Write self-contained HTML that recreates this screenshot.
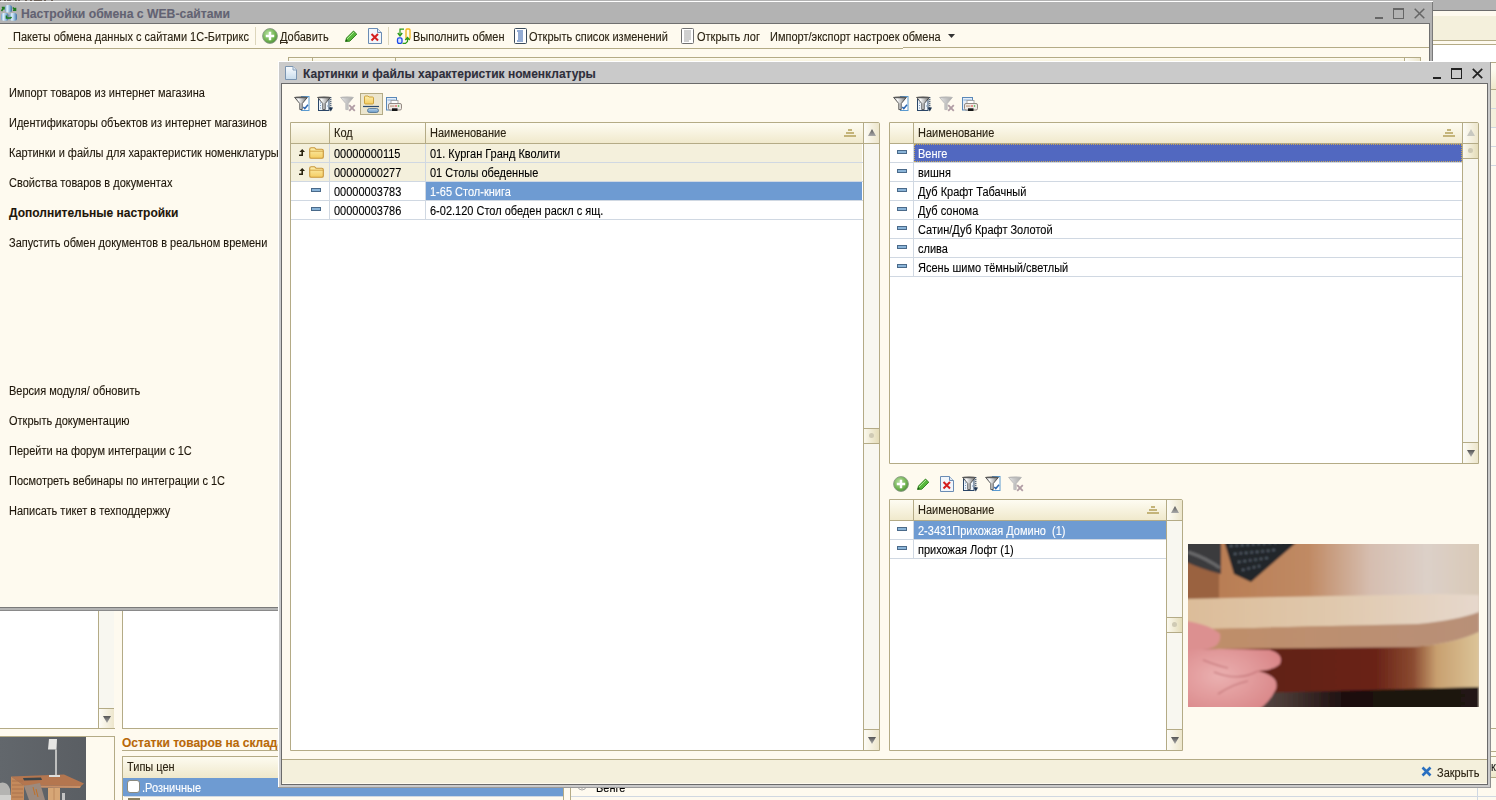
<!DOCTYPE html>
<html><head><meta charset="utf-8">
<style>
*{margin:0;padding:0;box-sizing:border-box}
html,body{width:1496px;height:800px;overflow:hidden}
body{position:relative;background:#fefaef;font-family:"Liberation Sans",sans-serif;font-size:11px;color:#2a2212}
.a{position:absolute}
.t{position:absolute;white-space:nowrap;line-height:13px;transform:scaleY(1.11);transform-origin:0 10.3px;-webkit-text-stroke:0.1px currentColor}
.min{position:absolute;height:3px;background:#222}
.max{position:absolute;border:1px solid #222;border-top-width:2px}
</style></head><body>
<svg width="0" height="0" style="position:absolute">
 <defs>
  <linearGradient id="gFun" x1="0" x2="1" y1="0" y2="0"><stop offset="0" stop-color="#9a9a9a"/><stop offset="0.3" stop-color="#fafafa"/><stop offset="0.65" stop-color="#b8b8b8"/><stop offset="1" stop-color="#5a5a5a"/></linearGradient>
  <linearGradient id="gFunL" x1="0" x2="1"><stop offset="0" stop-color="#e4e4e4"/><stop offset="1" stop-color="#a8a8a8"/></linearGradient>
  <linearGradient id="gThumb" x1="0" x2="1"><stop offset="0" stop-color="#fbf9ee"/><stop offset="1" stop-color="#e4dcb8"/></linearGradient>
  <radialGradient id="gAdd" cx="0.4" cy="0.35" r="0.7"><stop offset="0" stop-color="#b8e0a0"/><stop offset="0.7" stop-color="#6cb04c"/><stop offset="1" stop-color="#4a8a3a"/></radialGradient>
  <linearGradient id="gFold" x1="0" x2="0" y1="0" y2="1"><stop offset="0" stop-color="#fdf0b0"/><stop offset="1" stop-color="#f4cc60"/></linearGradient>
  <linearGradient id="gPill" x1="0" x2="0" y1="0" y2="1"><stop offset="0" stop-color="#b8d4ec"/><stop offset="1" stop-color="#6a98c4"/></linearGradient>
  <symbol id="funnel" viewBox="0 0 16 16"><path d="M0.6 1.4 L5.8 7.6 V13.6 H8.2 V7.6 L13.4 1.4 Z" fill="url(#gFun)" stroke="#484848" stroke-width="0.9" stroke-linejoin="round"/><ellipse cx="7" cy="1.4" rx="6.4" ry="0.9" fill="#5a5a5a"/></symbol>
  <symbol id="icChk" viewBox="0 0 16 16"><rect x="7.5" y="0.5" width="7.5" height="14" fill="#fff" stroke="#5a9ad0" stroke-width="1"/><use href="#funnel" x="0" y="0" width="16" height="16"/><path d="M9.3 11 L10.8 12.6 L14 8.8" fill="none" stroke="#2a66b0" stroke-width="1.5"/></symbol>
  <symbol id="icSort" viewBox="0 0 16 16"><rect x="1.5" y="3.5" width="10.5" height="11" fill="#eef4fa" stroke="#2a4668" stroke-width="1"/><path d="M3 7h1M3 9.5h1M3 12h1M10 10h1" stroke="#7a9ac0"/><use href="#funnel" x="0" y="0" width="16" height="16"/><path d="M13.8 1 V12" stroke="#2a4060" stroke-width="1.1" stroke-dasharray="1.2 0.8"/><path d="M11.6 11.5 H16 L13.8 15.5Z" fill="#1e3450"/></symbol>
  <symbol id="icX" viewBox="0 0 16 16"><path d="M0.6 1.4 L5.8 7.6 V13.6 H8.2 V7.6 L13.4 1.4 Z" fill="url(#gFunL)" stroke="#b0b0b0" stroke-width="0.7"/><ellipse cx="7" cy="1.4" rx="6.4" ry="0.9" fill="#b8b8b8"/><path d="M9.2 9.2 L14.8 14.8 M14.8 9.2 L9.2 14.8" stroke="#b09ca4" stroke-width="1.8"/></symbol>
  <symbol id="icPrn" viewBox="0 0 16 15"><rect x="0.5" y="0.5" width="10" height="12.5" fill="#e6eef8" stroke="#5a88b8"/><path d="M1.5 3h8" stroke="#8ab0d8"/><rect x="5" y="3.5" width="7" height="4" fill="#fff" stroke="#9a9a9a" stroke-width="0.8"/><rect x="2.5" y="6.5" width="13" height="6.5" rx="1.5" fill="#f0ebe6" stroke="#8a8078" stroke-width="0.9"/><rect x="6" y="11.3" width="5.5" height="2.7" fill="#161616"/><circle cx="10" cy="9" r="0.8" fill="#e02020"/><circle cx="12.5" cy="9" r="0.8" fill="#30b030"/><rect x="4" y="8.6" width="4.5" height="0.9" fill="#b08060"/></symbol>
  <symbol id="icAdd" viewBox="0 0 16 16"><circle cx="8" cy="8" r="7.4" fill="url(#gAdd)" stroke="#8a9a86" stroke-width="0.9"/><path d="M8 3.8v8.4M3.8 8h8.4" stroke="#fff" stroke-width="2.4"/></symbol>
  <symbol id="icPen" viewBox="0 0 13 12"><path d="M0.5 11.5 L1.5 8 L8.5 1 L11.8 4.2 L4.8 11.2 Z" fill="#58b83c" stroke="#2a7a1a" stroke-width="0.9"/><path d="M2 9 L9 2" stroke="#a8e890" stroke-width="1"/><path d="M0.5 11.5 L1.2 9.2 L2.8 10.8Z" fill="#1e5a12"/></symbol>
  <symbol id="icDel" viewBox="0 0 14 16"><path d="M0.5 0.5H9.5L13.5 4.5V15.5H0.5Z" fill="#f2f6fb" stroke="#6a8cb4"/><path d="M9.5 0.5V4.5H13.5" fill="#dde6f0" stroke="#6a8cb4"/><path d="M3.5 6 L10 12.5M10 6L3.5 12.5" stroke="#d41e1e" stroke-width="2"/></symbol>
  <symbol id="icFold" viewBox="0 0 15 12"><path d="M0.7 2.2 Q0.7 0.7 2.2 0.7 H5.5 L7 2.2 H12.8 Q14.3 2.2 14.3 3.7 V10 Q14.3 11.3 12.8 11.3 H2.2 Q0.7 11.3 0.7 10 Z" fill="url(#gFold)" stroke="#c8963a" stroke-width="1.1"/><path d="M0.7 4.2 H14.3" stroke="#d0a040" stroke-width="0.9"/></symbol>
  <symbol id="icUp" viewBox="0 0 6 7"><path d="M3.2 0 L6 3 H4 V7 H0 V5.6 H2.4 V3 H0.4Z" fill="#2a2410"/></symbol>
  <symbol id="icDash" viewBox="0 0 10 4"><rect x="0.5" y="0.5" width="9" height="3" fill="#8ab4d8" stroke="#4a6a8a" stroke-width="1"/></symbol>
  <symbol id="icSort2" viewBox="0 0 13 8"><path d="M4 0h4v2h-4z M2 3h8v2h-8z M0 6h12v2h-12z" fill="#c4b47a"/></symbol>
  <linearGradient id="gTri" x1="0" x2="0" y1="0" y2="1"><stop offset="0" stop-color="#555"/><stop offset="1" stop-color="#aaa"/></linearGradient>
 </defs>
</svg>

<div class="a" style="left:1433px;top:0px;width:63px;height:10px;background:#b3b3b3;"></div>
<div class="a" style="left:1433px;top:10px;width:63px;height:1px;background:#6c6c6c;"></div>
<div class="a" style="left:1433px;top:11px;width:63px;height:5px;background:#fefaef;"></div>
<div class="a" style="left:1433px;top:16px;width:63px;height:24px;background:#f4f0dc;"></div>
<div class="a" style="left:1433px;top:40px;width:63px;height:1px;background:#b4ab86;"></div>
<div class="a" style="left:1433px;top:44px;width:63px;height:1px;background:#b4ab86;"></div>
<div class="a" style="left:1433px;top:45px;width:63px;height:17px;background:#fff;"></div>
<div class="a" style="left:0px;top:0px;width:1433px;height:1px;background:#b3b3b3;"></div>
<div class="a" style="left:0px;top:0px;width:1px;height:1px;background:#6a6058;"></div>
<div class="a" style="left:4px;top:0px;width:2px;height:1px;background:#6a6058;"></div>
<div class="a" style="left:7px;top:0px;width:4px;height:1px;background:#6a6058;"></div>
<div class="a" style="left:15px;top:0px;width:2px;height:1px;background:#6a6058;"></div>
<div class="a" style="left:18px;top:0px;width:2px;height:1px;background:#6a6058;"></div>
<div class="a" style="left:25px;top:0px;width:2px;height:1px;background:#6a6058;"></div>
<div class="a" style="left:30px;top:0px;width:2px;height:1px;background:#6a6058;"></div>
<div class="a" style="left:34px;top:0px;width:8px;height:1px;background:#6a6058;"></div>
<div class="a" style="left:44px;top:0px;width:2px;height:1px;background:#6a6058;"></div>
<div class="a" style="left:51px;top:0px;width:2px;height:1px;background:#6a6058;"></div>
<div class="a" style="left:0px;top:1px;width:1433px;height:1px;background:#fff;"></div>
<div class="a" style="left:0px;top:2px;width:1433px;height:21px;background:#b3b3b3;"></div>
<div class="a" style="left:0px;top:23px;width:1430px;height:1px;background:#707070;"></div>
<div class="a" style="left:1429px;top:23px;width:4px;height:39px;background:#b3b3b3;"></div>
<div class="a" style="left:1429px;top:23px;width:1px;height:39px;background:#707070;"></div>
<div class="a" style="left:1432px;top:2px;width:1px;height:60px;background:#7a7a7a;"></div>
<svg class="a" style="left:0;top:4px" width="18" height="18" viewBox="0 0 18 18">
 <defs><linearGradient id="gCyl" x1="0" x2="1"><stop offset="0" stop-color="#6a9cc8"/><stop offset="0.3" stop-color="#e4f2fc"/><stop offset="0.6" stop-color="#9cc4e4"/><stop offset="1" stop-color="#3e6e9e"/></linearGradient></defs>
 <rect x="5" y="1" width="7" height="7.5" rx="2.5" fill="url(#gCyl)"/>
 <rect x="1" y="9" width="7.5" height="7.7" rx="2.5" fill="url(#gCyl)"/>
 <rect x="9.5" y="9" width="7.5" height="7.7" rx="2.5" fill="url(#gCyl)"/>
 <path d="M1.5 7 L3.8 3.8 M1.8 3.5 H4 V5.5" fill="none" stroke="#1e7a1e" stroke-width="1.6"/>
 <path d="M12.8 3.5 L15.5 6 M15.5 3.8 V6.2 H13" fill="none" stroke="#1e7a1e" stroke-width="1.6"/>
 <path d="M6.5 11.5 V14 H10.5 L11.5 13" fill="none" stroke="#1e7a1e" stroke-width="1.6"/>
</svg>
<div class="t" style="left:21px;top:7px;font-size:12.2px;font-weight:bold;color:#626272;line-height:15px;transform:none">Настройки обмена с WEB-сайтами</div>
<div class="min" style="left:1375px;top:17px;width:8px;height:2px;background:#666"></div>
<div class="max" style="left:1393px;top:8px;width:11px;height:11px;border-color:#666"></div>
<svg class="a" style="left:1414px;top:8px" width="11" height="11"><path d="M0.7 0.7L10.3 10.3M10.3 0.7L0.7 10.3" stroke="#666" stroke-width="1.5"/></svg>
<div class="t" style="left:13px;top:31px;">Пакеты обмена данных с сайтами 1С-Битрикс</div>
<div class="a" style="left:255px;top:27px;width:1px;height:18px;background:#ddd6bc;"></div>
<svg class="a" style="left:262px;top:28px" width="16" height="16"><use href="#icAdd" width="16" height="16"/></svg>
<div class="t" style="left:280px;top:31px;">Добавить</div>
<div class="a" style="left:280px;top:42px;width:8px;height:1px;background:#3a3020;"></div>
<svg class="a" style="left:345px;top:30px" width="13" height="12"><use href="#icPen" width="13" height="12"/></svg>
<svg class="a" style="left:368px;top:28px" width="14" height="16"><use href="#icDel" width="14" height="16"/></svg>
<div class="a" style="left:388px;top:27px;width:1px;height:18px;background:#ddd6bc;"></div>
<svg class="a" style="left:396px;top:28px" width="16" height="16" viewBox="0 0 16 16">
<rect x="10" y="1" width="4" height="10" rx="1" fill="#fffbe8" stroke="#f0b418" stroke-width="1.3"/>
<rect x="1.5" y="9.8" width="4.5" height="5.6" rx="1.6" fill="#d8e4ff" stroke="#1a48e8" stroke-width="1.3"/>
<path d="M8 1.2 H4 V7" fill="none" stroke="#2a9a1a" stroke-width="1.2"/><path d="M1.8 5 L4 7.8 L6.2 5" fill="none" stroke="#2a9a1a" stroke-width="1.4"/>
<path d="M6.5 15.4 H9.5 L11.5 13.5 V10.5" fill="none" stroke="#2a9a1a" stroke-width="1.2"/><path d="M9.3 12 L11.5 9.6 L13.7 12" fill="none" stroke="#2a9a1a" stroke-width="1.4"/>
</svg>
<div class="t" style="left:413px;top:31px;">Выполнить обмен</div>
<svg class="a" style="left:514px;top:28px" width="13" height="16" viewBox="0 0 13 16"><rect x="0.5" y="0.5" width="12" height="15" rx="1" fill="#fff" stroke="#3a4a5a"/><path d="M3 3h6M4 5h5M4 7h5M4 9h5M4 11h5M3 13h6" stroke="#2a5aa8" stroke-width="1"/></svg>
<div class="t" style="left:529px;top:31px;">Открыть список изменений</div>
<svg class="a" style="left:681px;top:28px" width="13" height="16" viewBox="0 0 13 16"><rect x="0.5" y="0.5" width="12" height="15" rx="1" fill="#fff" stroke="#707070"/><path d="M3 3h7M3 5h7M3 7h7M3 9h7M3 11h7M3 13h5" stroke="#a0a0a0" stroke-width="1"/></svg>
<div class="t" style="left:697px;top:31px;">Открыть лог</div>
<div class="t" style="left:770px;top:31px;">Импорт/экспорт настроек обмена</div>
<svg class="a" style="left:948px;top:34px" width="7" height="4"><path d="M0 0H7L3.5 4Z" fill="#333"/></svg>
<div class="a" style="left:8px;top:48px;width:895px;height:1px;background:#b4ab86;"></div>
<div class="a" style="left:903px;top:47px;width:526px;height:1px;background:#b4ab86;"></div>
<div class="a" style="left:288px;top:57px;width:1133px;height:1px;background:#b4ab86;"></div>
<div class="a" style="left:288px;top:58px;width:1132px;height:4px;background:linear-gradient(#fefcf2,#f6f0d8);"></div>
<div class="a" style="left:1405px;top:58px;width:15px;height:4px;background:linear-gradient(90deg,#fdfcf6,#ede6cc);"></div>
<div class="a" style="left:288px;top:57px;width:1px;height:5px;background:#b4ab86;"></div>
<div class="a" style="left:312px;top:57px;width:1px;height:5px;background:#b4ab86;"></div>
<div class="a" style="left:395px;top:57px;width:1px;height:5px;background:#b4ab86;"></div>
<div class="a" style="left:1404px;top:57px;width:1px;height:5px;background:#b4ab86;"></div>
<div class="a" style="left:1420px;top:57px;width:1px;height:5px;background:#b4ab86;"></div>
<div class="t" style="left:9px;top:87px;color:#1e160a;">Импорт товаров из интернет магазина</div>
<div class="t" style="left:9px;top:117px;color:#1e160a;">Идентификаторы объектов из интернет магазинов</div>
<div class="t" style="left:9px;top:147px;color:#1e160a;">Картинки и файлы для характеристик номенклатуры</div>
<div class="t" style="left:9px;top:177px;color:#1e160a;">Свойства товаров в документах</div>
<div class="t" style="left:9px;top:207px;color:#1e160a;font-weight:bold;font-size:12px;transform:none">Дополнительные настройки</div>
<div class="t" style="left:9px;top:237px;color:#1e160a;">Запустить обмен документов в реальном времени</div>
<div class="t" style="left:9px;top:385px;color:#1e160a;">Версия модуля/ обновить</div>
<div class="t" style="left:9px;top:415px;color:#1e160a;">Открыть документацию</div>
<div class="t" style="left:9px;top:445px;color:#1e160a;">Перейти на форум интеграции с 1С</div>
<div class="t" style="left:9px;top:475px;color:#1e160a;">Посмотреть вебинары по интеграции с 1С</div>
<div class="t" style="left:9px;top:505px;color:#1e160a;">Написать тикет в техподдержку</div>
<div class="a" style="left:0px;top:607px;width:280px;height:1px;background:#7a7a7a;"></div>
<div class="a" style="left:0px;top:608px;width:280px;height:2px;background:#b3b3b3;"></div>
<div class="a" style="left:0px;top:610px;width:280px;height:1px;background:#8a8a8a;"></div>
<div class="a" style="left:0px;top:611px;width:98px;height:117px;background:#fff;"></div>
<div class="a" style="left:98px;top:611px;width:1px;height:118px;background:#b4ab86;"></div>
<div class="a" style="left:99px;top:611px;width:15px;height:118px;background:#f8f7f0;"></div>
<div class="a" style="left:99px;top:708px;width:15px;height:21px;background:linear-gradient(90deg,#fdfcf6,#ede6cc);border-top:1px solid #b4ab86"></div>
<svg class="a" style="left:103px;top:715px" width="8" height="8"><path d="M0 1H8L4 8Z" fill="url(#gTri)"/></svg>
<div class="a" style="left:0px;top:728px;width:115px;height:1px;background:#b4ab86;"></div>
<div class="a" style="left:123px;top:611px;width:160px;height:117px;background:#fff;"></div>
<div class="a" style="left:122px;top:611px;width:1px;height:118px;background:#b4ab86;"></div>
<div class="a" style="left:122px;top:728px;width:160px;height:1px;background:#b4ab86;"></div>
<div class="a" style="left:0px;top:736px;width:115px;height:1px;background:#b4ab86;"></div>
<div class="a" style="left:114px;top:736px;width:1px;height:64px;background:#b4ab86;"></div>
<svg class="a" style="left:0;top:737px" width="86" height="63" viewBox="0 0 86 63">
<defs><filter id="bl1" filterUnits="userSpaceOnUse" x="-5" y="-5" width="96" height="73"><feGaussianBlur stdDeviation="0.45"/></filter>
<linearGradient id="wall" x1="0" x2="1"><stop offset="0" stop-color="#62676c"/><stop offset="1" stop-color="#5a5e63"/></linearGradient></defs>
<rect width="86" height="63" fill="url(#wall)"/>
<g filter="url(#bl1)">
<path d="M0 46 Q7 44 10 52 L11 63 H0Z" fill="#b4b4b2"/>
<path d="M0 58 H12 V63 H0Z" fill="#d0d0ce"/>
<path d="M11 39.5 L64 37.5 L84 46.5 L81 49 L24 48.5 Z" fill="#b47650"/>
<path d="M24 48.5 L81 49 L80 51 L25 50.5Z" fill="#c89068"/>
<path d="M11 39.5 L24 48.5 L24 63 L11 63Z" fill="#c48a5c"/>
<path d="M12 44h11M12 48h11M12 52h11M12 56h11M12 60h11" stroke="#a8704a" stroke-width="0.9"/>
<rect x="48" y="51" width="12" height="12" fill="#d6a676"/>
<path d="M54 51 V63" stroke="#b88458" stroke-width="0.8"/>
<path d="M24 49 L40 46 L45 63 L29 63Z" fill="#9c8a7e"/>
<path d="M33 50 L35 58 M36 52 L38 60" stroke="#c07028" stroke-width="1"/>
<path d="M23 41 L41 40.5 L42 43 L24 43.5Z" fill="#3e4448"/>
<path d="M49 2 H57 L56.5 12.5 H48Z" fill="#e6e6e4"/>
<rect x="55.2" y="12.5" width="1.6" height="26" fill="#d6d6d4"/>
<rect x="49" y="38" width="11" height="2" fill="#dededc"/>
<rect x="62" y="56" width="3" height="7" fill="#c4c4c4"/>
</g></svg>
<div class="t" style="left:122px;top:736px;font-size:12px;font-weight:bold;color:#b86808;line-height:15px;transform:none">Остатки товаров на складах</div>
<div class="a" style="left:122px;top:750px;width:160px;height:1px;background:#b4ab86;"></div>
<div class="a" style="left:122px;top:756px;width:160px;height:1px;background:#b4ab86;"></div>
<div class="a" style="left:122px;top:756px;width:1px;height:44px;background:#b4ab86;"></div>
<div class="a" style="left:123px;top:757px;width:160px;height:21px;background:linear-gradient(#fdfbf0,#efe8cb);"></div>
<div class="t" style="left:127px;top:761px;">Типы цен</div>
<div class="a" style="left:123px;top:778px;width:441px;height:18px;background:#6e9bd2;"></div>
<div class="a" style="left:127px;top:780px;width:13px;height:13px;background:#fff;border:1px solid #8a8a80;border-radius:3px"></div>
<div class="t" style="left:142px;top:782px;color:#fff">.Розничные</div>
<div class="a" style="left:124px;top:796px;width:440px;height:1px;background:#d0d8e2;"></div>
<div class="a" style="left:128px;top:798px;width:12px;height:2px;background:#8a8060;"></div>
<div class="a" style="left:563px;top:786px;width:1px;height:14px;background:#b4ab86;"></div>
<div class="a" style="left:570px;top:786px;width:1px;height:14px;background:#b4ab86;"></div>
<svg class="a" style="left:577px;top:786px" width="10" height="6"><path d="M1 0 A4 4 0 0 0 9 0 M5 0V3" fill="none" stroke="#aaa"/></svg>
<div class="t" style="left:596px;top:782px;color:#000">Венге</div>
<div class="a" style="left:571px;top:796px;width:925px;height:1px;background:#d0d8e2;"></div>
<div class="a" style="left:1477px;top:788px;width:1px;height:12px;background:#d0d8e2;"></div>
<div class="a" style="left:1491px;top:62px;width:5px;height:1px;background:#b4ab86;"></div>
<div class="a" style="left:1491px;top:63px;width:5px;height:6px;background:#fefaef;"></div>
<div class="a" style="left:1491px;top:69px;width:5px;height:20px;background:linear-gradient(#fdfbf0,#efe8cb);"></div>
<div class="a" style="left:1491px;top:89px;width:5px;height:1px;background:#b4ab86;"></div>
<div class="a" style="left:1491px;top:90px;width:5px;height:18px;background:#f4f0dc;"></div>
<div class="a" style="left:1491px;top:108px;width:5px;height:1px;background:#d0d8e2;"></div>
<div class="a" style="left:1491px;top:109px;width:5px;height:18px;background:#f4f0dc;"></div>
<div class="a" style="left:1491px;top:127px;width:5px;height:1px;background:#d0d8e2;"></div>
<div class="a" style="left:1491px;top:146px;width:5px;height:1px;background:#d0d8e2;"></div>
<div class="a" style="left:1491px;top:165px;width:5px;height:1px;background:#d0d8e2;"></div>
<div class="a" style="left:1491px;top:728px;width:5px;height:1px;background:#b4ab86;"></div>
<div class="a" style="left:1491px;top:751px;width:5px;height:1px;background:#b4ab86;"></div>
<div class="a" style="left:1491px;top:756px;width:5px;height:1px;background:#b4ab86;"></div>
<div class="a" style="left:1491px;top:757px;width:5px;height:20px;background:linear-gradient(#fdfbf0,#efe8cb);"></div>
<div class="a" style="left:1491px;top:777px;width:5px;height:1px;background:#b4ab86;"></div>
<div class="t" style="left:1491px;top:761px;color:#1a1a1a">кл</div>
<div class="a" style="left:278px;top:61px;width:1213px;height:727px;background:#fff;"></div>
<div class="a" style="left:279px;top:62px;width:1212px;height:726px;background:#cacaca;"></div>
<div class="a" style="left:1490px;top:62px;width:1px;height:726px;background:#8e8e8e;"></div>
<div class="a" style="left:278px;top:787px;width:1213px;height:1px;background:#9a9a9a;"></div>
<div class="a" style="left:281px;top:83px;width:1207px;height:702px;background:#fefaef;border:1px solid #6a6a6a"></div>
<svg class="a" style="left:285px;top:66px" width="12" height="14" viewBox="0 0 12 14"><defs><linearGradient id="gDoc" x1="0" x2="0" y1="0" y2="1"><stop offset="0" stop-color="#fbfdff"/><stop offset="1" stop-color="#c8dcec"/></linearGradient></defs><path d="M0.5 0.5H8L11.5 4V13.5H0.5Z" fill="url(#gDoc)" stroke="#7a94b0"/><path d="M8 0.5V4H11.5" fill="#dde6f0" stroke="#8aa2bc"/></svg>
<div class="t" style="left:303px;top:67px;font-size:12px;font-weight:bold;color:#2e2e3a;line-height:15px;transform:none">Картинки и файлы характеристик номенклатуры</div>
<div class="min" style="left:1433px;top:77px;width:8px;height:2px"></div>
<div class="max" style="left:1451px;top:68px;width:11px;height:11px"></div>
<svg class="a" style="left:1472px;top:68px" width="11" height="11"><path d="M0.8 0.8L10.2 10.2M10.2 0.8L0.8 10.2" stroke="#222" stroke-width="1.7"/></svg>
<div class="a" style="left:282px;top:759px;width:1205px;height:24px;background:#f4f0dc;border-top:1px solid #b4ab86"></div>
<svg class="a" style="left:1421px;top:766px" width="11" height="11"><path d="M1.5 1.5L9.5 9.5M9.5 1.5L1.5 9.5" stroke="#2a70c0" stroke-width="2.6"/></svg>
<div class="t" style="left:1437px;top:767px;">Закрыть</div>
<svg class="a" style="left:294px;top:96px" width="16" height="16"><use href="#icChk" width="16" height="16"/></svg>
<svg class="a" style="left:317px;top:96px" width="16" height="16"><use href="#icSort" width="16" height="16"/></svg>
<svg class="a" style="left:340px;top:96px" width="16" height="16"><use href="#icX" width="16" height="16"/></svg>
<div class="a" style="left:360px;top:93px;width:23px;height:22px;background:#ece6ce;border:1px solid #b4ab86"></div>
<svg class="a" style="left:363px;top:95px" width="17" height="18" viewBox="0 0 17 18"><path d="M1.5 2 Q1.5 1 2.5 1 H5 L6 2 H9.5 Q10.5 2 10.5 3 V8 Q10.5 9 9.5 9 H2.5 Q1.5 9 1.5 8Z" fill="url(#gFold)" stroke="#c89a30" stroke-width="0.9"/><path d="M0 11.5 H16" stroke="#2a4a70" stroke-width="1.2"/><rect x="4.5" y="13.5" width="11" height="4" rx="2" fill="url(#gPill)" stroke="#4a6e90" stroke-width="0.8"/></svg>
<svg class="a" style="left:386px;top:97px" width="16" height="15"><use href="#icPrn" width="16" height="15"/></svg>
<svg class="a" style="left:893px;top:96px" width="16" height="16"><use href="#icChk" width="16" height="16"/></svg>
<svg class="a" style="left:916px;top:96px" width="16" height="16"><use href="#icSort" width="16" height="16"/></svg>
<svg class="a" style="left:939px;top:96px" width="16" height="16"><use href="#icX" width="16" height="16"/></svg>
<svg class="a" style="left:962px;top:97px" width="16" height="15"><use href="#icPrn" width="16" height="15"/></svg>
<svg class="a" style="left:893px;top:476px" width="16" height="16"><use href="#icAdd" width="16" height="16"/></svg>
<svg class="a" style="left:917px;top:478px" width="13" height="12"><use href="#icPen" width="13" height="12"/></svg>
<svg class="a" style="left:940px;top:476px" width="14" height="16"><use href="#icDel" width="14" height="16"/></svg>
<svg class="a" style="left:962px;top:476px" width="16" height="16"><use href="#icSort" width="16" height="16"/></svg>
<svg class="a" style="left:985px;top:476px" width="16" height="16"><use href="#icChk" width="16" height="16"/></svg>
<svg class="a" style="left:1008px;top:476px" width="16" height="16"><use href="#icX" width="16" height="16"/></svg>
<div class="a" style="left:290px;top:122px;width:590px;height:629px;background:#fff;border:1px solid #b4ab86;border-top-right-radius:2px"></div>
<div class="a" style="left:291px;top:123px;width:572px;height:20px;background:linear-gradient(#fefcf2,#f0e9cc);"></div>
<div class="a" style="left:291px;top:143px;width:572px;height:1px;background:#b4ab86;"></div>
<div class="a" style="left:291px;top:144px;width:571px;height:18px;background:#f4f0dc;"></div>
<div class="a" style="left:291px;top:162px;width:572px;height:1px;background:#d0d8e2;"></div>
<div class="a" style="left:291px;top:163px;width:571px;height:18px;background:#f4f0dc;"></div>
<div class="a" style="left:291px;top:181px;width:572px;height:1px;background:#d0d8e2;"></div>
<div class="a" style="left:426px;top:182px;width:436px;height:18px;background:#6e9bd2;"></div>
<div class="a" style="left:291px;top:200px;width:572px;height:1px;background:#d0d8e2;"></div>
<div class="a" style="left:291px;top:219px;width:572px;height:1px;background:#d0d8e2;"></div>
<div class="a" style="left:329px;top:123px;width:1px;height:20px;background:#b4ab86;"></div>
<div class="a" style="left:329px;top:144px;width:1px;height:76px;background:#d0d8e2;"></div>
<div class="a" style="left:425px;top:123px;width:1px;height:20px;background:#b4ab86;"></div>
<div class="a" style="left:425px;top:144px;width:1px;height:76px;background:#d0d8e2;"></div>
<div class="a" style="left:863px;top:123px;width:1px;height:627px;background:#b4ab86;"></div>
<div class="a" style="left:864px;top:123px;width:15px;height:627px;background:#f8f7f0;"></div>
<div class="a" style="left:864px;top:123px;width:15px;height:20px;background:linear-gradient(90deg,#fdfcf6,#ede6cc)"></div>
<div class="a" style="left:864px;top:143px;width:15px;height:1px;background:#b4ab86;"></div>
<svg class="a" style="left:868px;top:129px" width="8" height="8"><path d="M0 7H8L4 0Z" fill="url(#gTri)"/></svg>
<div class="a" style="left:864px;top:729px;width:15px;height:21px;background:linear-gradient(90deg,#fdfcf6,#ede6cc);border-top:1px solid #b4ab86"></div>
<svg class="a" style="left:868px;top:736px" width="8" height="8"><path d="M0 1H8L4 8Z" fill="url(#gTri)"/></svg>
<div class="a" style="left:864px;top:428px;width:15px;height:16px;background:linear-gradient(90deg,#fbf9ee,#e4dcb8);border-top:1px solid #b4ab86;border-bottom:1px solid #b4ab86"></div>
<div class="a" style="left:869px;top:433px;width:5px;height:5px;border-radius:50%;background:#cfcab4"></div>
<svg class="a" style="left:844px;top:129px" width="13" height="8"><use href="#icSort2" width="13" height="8"/></svg>
<div class="t" style="left:334px;top:127px;">Код</div>
<div class="t" style="left:430px;top:127px;">Наименование</div>
<svg class="a" style="left:299px;top:149px" width="6" height="7"><use href="#icUp" width="6" height="7"/></svg>
<svg class="a" style="left:309px;top:147px" width="15" height="12"><use href="#icFold" width="15" height="12"/></svg>
<svg class="a" style="left:299px;top:168px" width="6" height="7"><use href="#icUp" width="6" height="7"/></svg>
<svg class="a" style="left:309px;top:166px" width="15" height="12"><use href="#icFold" width="15" height="12"/></svg>
<svg class="a" style="left:311px;top:188px" width="10" height="4"><use href="#icDash" width="10" height="4"/></svg>
<svg class="a" style="left:311px;top:207px" width="10" height="4"><use href="#icDash" width="10" height="4"/></svg>
<div class="t" style="left:334px;top:148px;color:#000">00000000115</div>
<div class="t" style="left:430px;top:148px;color:#000">01. Курган Гранд Кволити</div>
<div class="t" style="left:334px;top:167px;color:#000">00000000277</div>
<div class="t" style="left:430px;top:167px;color:#000">01 Столы обеденные</div>
<div class="t" style="left:334px;top:186px;color:#000">00000003783</div>
<div class="t" style="left:430px;top:186px;color:#fff">1-65 Стол-книга</div>
<div class="t" style="left:334px;top:205px;color:#000">00000003786</div>
<div class="t" style="left:430px;top:205px;color:#000">6-02.120 Стол обеден раскл с ящ.</div>
<div class="a" style="left:889px;top:122px;width:590px;height:342px;background:#fff;border:1px solid #b4ab86;border-top-right-radius:2px"></div>
<div class="a" style="left:890px;top:123px;width:572px;height:20px;background:linear-gradient(#fefcf2,#f0e9cc);"></div>
<div class="a" style="left:890px;top:143px;width:572px;height:1px;background:#b4ab86;"></div>
<div class="a" style="left:914px;top:144px;width:548px;height:18px;background:#5168c0;"></div>
<div class="a" style="left:890px;top:162px;width:572px;height:1px;background:#d0d8e2;"></div>
<div class="a" style="left:890px;top:181px;width:572px;height:1px;background:#d0d8e2;"></div>
<div class="a" style="left:890px;top:200px;width:572px;height:1px;background:#d0d8e2;"></div>
<div class="a" style="left:890px;top:219px;width:572px;height:1px;background:#d0d8e2;"></div>
<div class="a" style="left:890px;top:238px;width:572px;height:1px;background:#d0d8e2;"></div>
<div class="a" style="left:890px;top:257px;width:572px;height:1px;background:#d0d8e2;"></div>
<div class="a" style="left:890px;top:276px;width:572px;height:1px;background:#d0d8e2;"></div>
<div class="a" style="left:913px;top:123px;width:1px;height:20px;background:#b4ab86;"></div>
<div class="a" style="left:913px;top:144px;width:1px;height:133px;background:#d0d8e2;"></div>
<div class="a" style="left:1462px;top:123px;width:1px;height:340px;background:#b4ab86;"></div>
<div class="a" style="left:1463px;top:123px;width:15px;height:340px;background:#f8f7f0;"></div>
<div class="a" style="left:1463px;top:123px;width:15px;height:20px;background:linear-gradient(90deg,#fdfcf6,#ede6cc)"></div>
<div class="a" style="left:1463px;top:143px;width:15px;height:1px;background:#b4ab86;"></div>
<svg class="a" style="left:1467px;top:129px" width="8" height="8"><path d="M0 7H8L4 0Z" fill="#c8c8c0"/></svg>
<div class="a" style="left:1463px;top:442px;width:15px;height:21px;background:linear-gradient(90deg,#fdfcf6,#ede6cc);border-top:1px solid #b4ab86"></div>
<svg class="a" style="left:1467px;top:449px" width="8" height="8"><path d="M0 1H8L4 8Z" fill="url(#gTri)"/></svg>
<div class="a" style="left:1463px;top:143px;width:15px;height:16px;background:linear-gradient(90deg,#fbf9ee,#e4dcb8);border-top:1px solid #b4ab86;border-bottom:1px solid #b4ab86"></div>
<div class="a" style="left:1468px;top:148px;width:5px;height:5px;border-radius:50%;background:#cfcab4"></div>
<svg class="a" style="left:1443px;top:129px" width="13" height="8"><use href="#icSort2" width="13" height="8"/></svg>
<div class="a" style="left:914px;top:144px;width:548px;height:18px;border:1px dotted #c8a858"></div>
<div class="t" style="left:918px;top:127px;">Наименование</div>
<svg class="a" style="left:897px;top:150px" width="10" height="4"><use href="#icDash" width="10" height="4"/></svg>
<div class="t" style="left:918px;top:148px;color:#fff">Венге</div>
<svg class="a" style="left:897px;top:169px" width="10" height="4"><use href="#icDash" width="10" height="4"/></svg>
<div class="t" style="left:918px;top:167px;color:#000">вишня</div>
<svg class="a" style="left:897px;top:188px" width="10" height="4"><use href="#icDash" width="10" height="4"/></svg>
<div class="t" style="left:918px;top:186px;color:#000">Дуб Крафт Табачный</div>
<svg class="a" style="left:897px;top:207px" width="10" height="4"><use href="#icDash" width="10" height="4"/></svg>
<div class="t" style="left:918px;top:205px;color:#000">Дуб сонома</div>
<svg class="a" style="left:897px;top:226px" width="10" height="4"><use href="#icDash" width="10" height="4"/></svg>
<div class="t" style="left:918px;top:224px;color:#000">Сатин/Дуб Крафт Золотой</div>
<svg class="a" style="left:897px;top:245px" width="10" height="4"><use href="#icDash" width="10" height="4"/></svg>
<div class="t" style="left:918px;top:243px;color:#000">слива</div>
<svg class="a" style="left:897px;top:264px" width="10" height="4"><use href="#icDash" width="10" height="4"/></svg>
<div class="t" style="left:918px;top:262px;color:#000">Ясень шимо тёмный/светлый</div>
<div class="a" style="left:889px;top:499px;width:294px;height:252px;background:#fff;border:1px solid #b4ab86;border-top-right-radius:2px"></div>
<div class="a" style="left:890px;top:500px;width:276px;height:20px;background:linear-gradient(#fefcf2,#f0e9cc);"></div>
<div class="a" style="left:890px;top:520px;width:276px;height:1px;background:#b4ab86;"></div>
<div class="a" style="left:914px;top:521px;width:252px;height:18px;background:#6e9bd2;"></div>
<div class="a" style="left:890px;top:539px;width:276px;height:1px;background:#d0d8e2;"></div>
<div class="a" style="left:890px;top:558px;width:276px;height:1px;background:#d0d8e2;"></div>
<div class="a" style="left:913px;top:500px;width:1px;height:20px;background:#b4ab86;"></div>
<div class="a" style="left:913px;top:521px;width:1px;height:38px;background:#d0d8e2;"></div>
<div class="a" style="left:1166px;top:500px;width:1px;height:250px;background:#b4ab86;"></div>
<div class="a" style="left:1167px;top:500px;width:15px;height:250px;background:#f8f7f0;"></div>
<div class="a" style="left:1167px;top:500px;width:15px;height:20px;background:linear-gradient(90deg,#fdfcf6,#ede6cc)"></div>
<div class="a" style="left:1167px;top:520px;width:15px;height:1px;background:#b4ab86;"></div>
<svg class="a" style="left:1171px;top:506px" width="8" height="8"><path d="M0 7H8L4 0Z" fill="url(#gTri)"/></svg>
<div class="a" style="left:1167px;top:729px;width:15px;height:21px;background:linear-gradient(90deg,#fdfcf6,#ede6cc);border-top:1px solid #b4ab86"></div>
<svg class="a" style="left:1171px;top:736px" width="8" height="8"><path d="M0 1H8L4 8Z" fill="url(#gTri)"/></svg>
<div class="a" style="left:1167px;top:617px;width:15px;height:16px;background:linear-gradient(90deg,#fbf9ee,#e4dcb8);border-top:1px solid #b4ab86;border-bottom:1px solid #b4ab86"></div>
<div class="a" style="left:1172px;top:622px;width:5px;height:5px;border-radius:50%;background:#cfcab4"></div>
<svg class="a" style="left:1147px;top:506px" width="13" height="8"><use href="#icSort2" width="13" height="8"/></svg>
<div class="t" style="left:918px;top:504px;">Наименование</div>
<svg class="a" style="left:897px;top:527px" width="10" height="4"><use href="#icDash" width="10" height="4"/></svg>
<svg class="a" style="left:897px;top:546px" width="10" height="4"><use href="#icDash" width="10" height="4"/></svg>
<div class="t" style="left:918px;top:525px;color:#fff">2-3431Прихожая Домино&nbsp; (1)</div>
<div class="t" style="left:918px;top:544px;color:#000">прихожая Лофт (1)</div>
<svg class="a" style="left:1188px;top:544px" width="291" height="163" viewBox="0 0 291 163">
<defs>
<filter id="bl2" filterUnits="userSpaceOnUse" x="-10" y="-10" width="311" height="183"><feGaussianBlur stdDeviation="1.3"/></filter>
<clipPath id="cp2"><rect width="291" height="163"/></clipPath>
<linearGradient id="desk" x1="0" x2="1" y1="0" y2="0"><stop offset="0.1" stop-color="#b87c52"/><stop offset="0.42" stop-color="#c08a64"/><stop offset="0.62" stop-color="#d6beb0"/><stop offset="0.8" stop-color="#dcd0c8"/><stop offset="1" stop-color="#d8c8b4"/></linearGradient>
<linearGradient id="top" x1="0" x2="1" y1="0" y2="0"><stop offset="0" stop-color="#dcbc98"/><stop offset="0.5" stop-color="#e0c8ac"/><stop offset="1" stop-color="#e6d8cc"/></linearGradient>
<linearGradient id="edge" x1="0" x2="1" y1="0" y2="0"><stop offset="0" stop-color="#c08e68"/><stop offset="1" stop-color="#b89078"/></linearGradient>
<linearGradient id="under" x1="0" x2="1" y1="0" y2="0"><stop offset="0" stop-color="#5a1c14"/><stop offset="0.66" stop-color="#6a2418"/><stop offset="0.78" stop-color="#8a4a30"/><stop offset="0.86" stop-color="#c8a070"/><stop offset="1" stop-color="#dcc498"/></linearGradient>
<linearGradient id="bot" x1="0" x2="1" y1="0" y2="0"><stop offset="0" stop-color="#7a6c68"/><stop offset="0.35" stop-color="#4a3a36"/><stop offset="0.55" stop-color="#1e1010"/><stop offset="1" stop-color="#201812"/></linearGradient>
<radialGradient id="hand" cx="0.4" cy="0.4" r="0.7"><stop offset="0" stop-color="#eab0b0"/><stop offset="1" stop-color="#d88284"/></radialGradient>
</defs>
<g clip-path="url(#cp2)"><g filter="url(#bl2)">
<rect x="-10" y="-10" width="311" height="183" fill="url(#desk)"/>
<path d="M-10 -10 H31 V57 H-10Z" fill="#9a6240"/>
<path d="M-10 -10 H33 L33 30 Q10 24 -10 14Z" fill="#3a3a3c"/>
<path d="M0 8 Q18 14 32 24" fill="none" stroke="#6a6a6c" stroke-width="3"/>
<path d="M34 -10 L118 -10 L63 38 L46 30Z" fill="#22252a"/>
<path d="M42 2 L98 -2 M46 10 L88 6 M50 18 L80 14 M54 26 L72 22" stroke="#5a6470" stroke-width="2" stroke-dasharray="2.5 3"/>
<path d="M-10 55 L250 50 L291 51 L291 68 Q270 76 230 80 L20 85 L-10 86Z" fill="url(#top)"/>
<path d="M-10 86 L20 85 L230 80 Q270 76 291 68 L291 88 Q265 100 225 103 L30 105 L-10 105Z" fill="url(#edge)"/>
<path d="M-10 105 L30 105 L225 103 Q265 100 291 88 L291 145 L-10 152Z" fill="url(#under)"/>
<path d="M-10 151 L291 143 V173 H-10Z" fill="url(#bot)"/>
<path d="M-10 76 Q22 80 32 90 Q34 102 20 105 Q6 108 -10 108Z" fill="#dc9090"/>
<path d="M-10 106 Q30 104 82 106 Q96 110 92 120 Q86 126 70 127 Q92 132 88 145 Q80 163 58 173 L-10 173Z" fill="url(#hand)"/>
<path d="M15 116 Q30 122 40 124 M26 128 Q50 138 70 127 M30 150 Q45 140 60 137" fill="none" stroke="#c07074" stroke-width="1.2"/>
</g></g></svg>
</body></html>
